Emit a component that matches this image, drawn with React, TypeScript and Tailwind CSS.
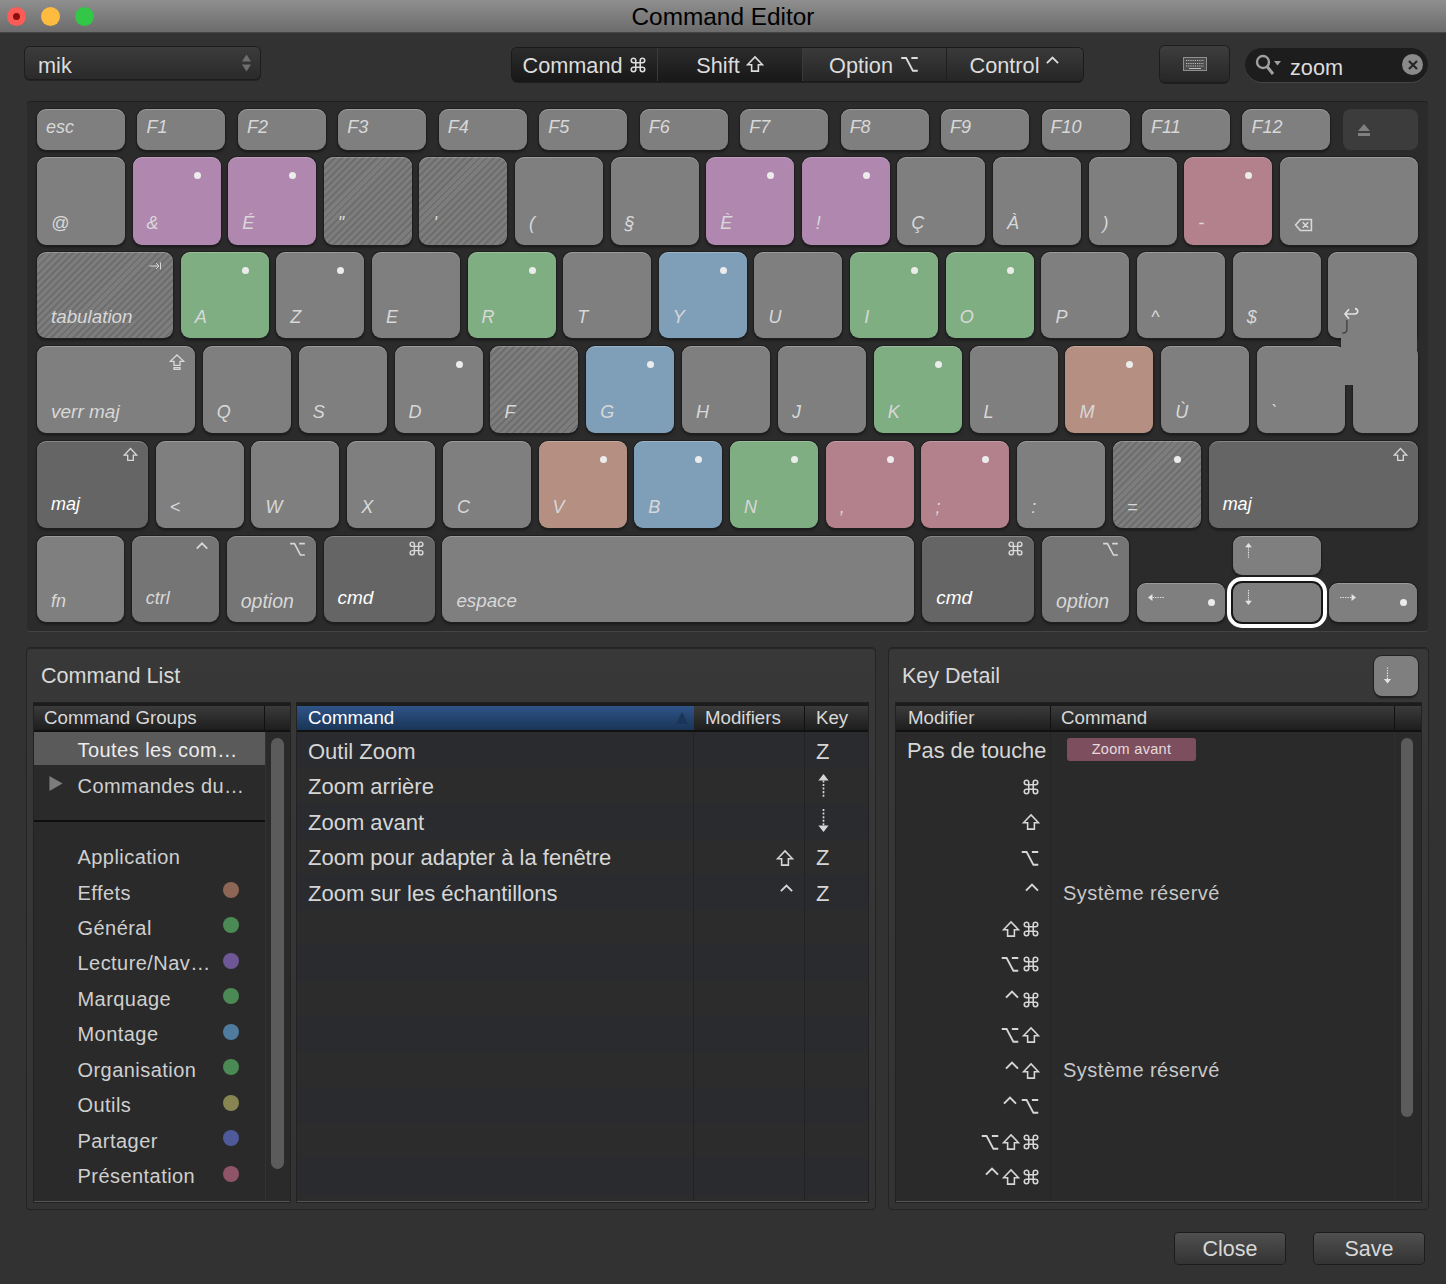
import React from "react";

const I = ({ className = "", children, vb = "0 0 24 24", sw = 2 }: { className?: string; children: React.ReactNode; vb?: string; sw?: number }) => (
  <svg viewBox={vb} className={className} fill="none" stroke="currentColor" strokeWidth={sw} strokeLinecap="butt" strokeLinejoin="miter">
    {children}
  </svg>
);
const Cmd = ({ className = "w-[18px] h-[18px]" }: { className?: string }) => (
  <I className={className} sw={2.1}><path d="M15 6v12a3 3 0 1 0 3-3H6a3 3 0 1 0 3 3V6a3 3 0 1 0-3 3h12a3 3 0 1 0-3-3" /></I>
);
const Shift = ({ className = "w-[18px] h-[20px]" }: { className?: string }) => (
  <I className={className} sw={2.1}><path d="M12 2.5 22 13h-5.5v8.5h-9V13H2z" /></I>
);
const Opt = ({ className = "w-[20px] h-[18px]" }: { className?: string }) => (
  <I className={className} sw={2.4}><path d="M1 4h6.5l9 17H23M14.5 4H23" /></I>
);
const Ctrl = ({ className = "w-[16px] h-[16px]" }: { className?: string }) => (
  <I className={className} sw={3}><path d="M3 13 12 4l9 9" /></I>
);
const Caps = ({ className = "w-[16px] h-[20px]" }: { className?: string }) => (
  <I className={className} sw={2}><path d="M12 1.5 22 11h-5.5v6h-9v-6H2zM7.5 20.5h9v2.5h-9z" /></I>
);
const ArrowV = ({ up, className = "w-[10px] h-[18px]" }: { up?: boolean; className?: string }) => (
  <svg viewBox="0 0 10 18" className={className} fill="currentColor">
    {up ? (
      <>
        <path d="M5 0 9 5H1z" />
        <path d="M5 5v13" stroke="currentColor" strokeWidth="1.3" strokeDasharray="1.6 1.2" fill="none" />
      </>
    ) : (
      <>
        <path d="M5 18 1 13h8z" />
        <path d="M5 0v13" stroke="currentColor" strokeWidth="1.3" strokeDasharray="1.6 1.2" fill="none" />
      </>
    )}
  </svg>
);
const ArrowH = ({ left }: { left?: boolean }) => (
  <svg viewBox="0 0 18 10" className="w-[16px] h-[9px] mt-[3px]" fill="currentColor">
    {left ? (
      <>
        <path d="M0 5l5-4v8z" />
        <path d="M5 5h13" stroke="currentColor" strokeWidth="1.3" strokeDasharray="1.6 1.2" fill="none" />
      </>
    ) : (
      <>
        <path d="M18 5l-5-4v8z" />
        <path d="M0 5h13" stroke="currentColor" strokeWidth="1.3" strokeDasharray="1.6 1.2" fill="none" />
      </>
    )}
  </svg>
);

const GREY = "bg-[#7f7f7f]";
const PUR = "bg-[#b087af]";
const GRN = "bg-[#7fae82]";
const BLU = "bg-[#7f9fb9]";
const ROS = "bg-[#b3818b]";
const SAL = "bg-[#b48f82]";
const DRK = "bg-[#656565]";
const MID = "bg-[#757575]";
const HAT =
  "bg-[repeating-linear-gradient(-45deg,#6e6e6e_0px,#6e6e6e_2px,#7d7d7d_2px,#7d7d7d_5px)]";
const KEYBASE =
  "relative flex flex-col shrink-0 h-full rounded-[9px] text-[#d8d8d8] italic shadow-[inset_0_1px_0_rgba(255,255,255,0.22),0_0_0_1px_#1f1f1f,0_2px_3px_rgba(0,0,0,0.5)]";

type KP = { w?: string; c?: string; l?: React.ReactNode; dot?: boolean; icon?: React.ReactNode; white?: boolean; sz?: string; b?: string };
function Key({ w = "w-[88px]", c = GREY, l, dot, icon, white, sz = "text-[18px]", b = "mb-[11px]" }: KP) {
  return (
    <div className={`${KEYBASE} ${w} ${c}`}>
      {dot && <span className="self-end mt-[14.5px] mr-[20px] w-[7px] h-[7px] rounded-full bg-[#ececec]" />}
      {icon && <span className="self-end mt-[5px] mr-[10px] flex not-italic">{icon}</span>}
      <span className={`mt-auto ml-[14px] leading-[20px] ${b} ${sz} ${white ? "text-white" : ""}`}>{l}</span>
    </div>
  );
}
function FKey({ l, w = "w-[88px]" }: { l: string; w?: string }) {
  return (
    <div className={`${KEYBASE} ${w} ${GREY} justify-center pl-[9px] pb-[5px] text-[18px]`}>{l}</div>
  );
}
function ArrowKey({ icon, dot, focus }: { icon: React.ReactNode; dot?: boolean; focus?: boolean }) {
  return (
    <div
      className={`relative flex justify-between w-[88px] h-[39px] rounded-[9px] text-[#e4e4e4] ${GREY} ${
        focus
          ? "shadow-[0_0_0_2px_#161616,0_0_0_6px_#ffffff]"
          : "shadow-[inset_0_1px_0_rgba(255,255,255,0.22),0_0_0_1px_#1f1f1f,0_2px_3px_rgba(0,0,0,0.5)]"
      }`}
    >
      <span className="ml-[11px] mt-[7px] flex">{icon}</span>
      {dot && <span className="mr-[10px] mt-[16px] w-[7px] h-[7px] rounded-full bg-[#ececec]" />}
    </div>
  );
}

const FS = ["F1", "F2", "F3", "F4", "F5", "F6", "F7", "F8", "F9", "F10", "F11", "F12"];
const R1 = "mb-[12px]";

function Keyboard() {
  return (
    <div className="ml-[27px] w-[1401px] shrink-0 h-[530px] bg-[#2b2b2b] rounded-[3px] pl-[10px] pt-[8px] shadow-[inset_0_1px_0_#1f1f1f,0_1px_0_#444444]">
      <div className="flex gap-[12.46px] h-[41px]">
        <FKey l="esc" />
        {FS.map((f) => (
          <FKey key={f} l={f} />
        ))}
        <div className="w-[75px] h-full rounded-[8px] bg-[#3c3c3c] flex items-center pl-[14px] text-[#808080]">
          <svg viewBox="0 0 14 14" className="w-[14px] h-[14px]" fill="currentColor">
            <path d="M7 1l6 7H1zM1 10h12v3H1z" />
          </svg>
        </div>
      </div>
      <div className="flex gap-[7.6px] h-[88px] mt-[7px]">
        <Key b={R1} l="@" />
        <Key b={R1} c={PUR} dot l="&" />
        <Key b={R1} c={PUR} dot l="É" />
        <Key b={R1} c={HAT} l='"' />
        <Key b={R1} c={HAT} l="'" />
        <Key b={R1} l="(" />
        <Key b={R1} l="§" />
        <Key b={R1} c={PUR} dot l="È" />
        <Key b={R1} c={PUR} dot l="!" />
        <Key b={R1} l="Ç" />
        <Key b={R1} l="À" />
        <Key b={R1} l=")" />
        <Key b={R1} c={ROS} dot l="-" />
        <Key
          b={R1}
          w="w-[138px]"
          l={
            <I className="w-[19px] h-[16px] -mt-[1px]" vb="0 0 24 20" sw={2}>
              <path d="M8 3h14v14H8l-6-7zM11 6.5l7 7M18 6.5l-7 7" />
            </I>
          }
        />
      </div>
      <div className="flex gap-[7.65px] h-[86px] mt-[7px]">
        <Key
          w="w-[136px]"
          c={HAT}
          l="tabulation"
          sz="text-[18.8px]"
          icon={
            <I className="w-[16px] h-[12px] mt-[3px]" sw={2}>
              <path d="M1 12h19M14 6l6 6-6 6M23 5v14" />
            </I>
          }
        />
        {[
          ["A", GRN, 1],
          ["Z", GREY, 1],
          ["E", GREY, 0],
          ["R", GRN, 1],
          ["T", GREY, 0],
          ["Y", BLU, 1],
          ["U", GREY, 0],
          ["I", GRN, 1],
          ["O", GRN, 1],
          ["P", GREY, 0],
          ["^", GREY, 0],
          ["$", GREY, 0],
        ].map(([l, c, d]) => (
          <Key key={l as string} l={l as string} c={c as string} dot={!!d} />
        ))}
        <div className={`${KEYBASE} z-10 w-[89px] rounded-br-none ${GREY}`}>
          <span className="mt-auto mb-[17px] ml-[15px] flex text-[#e4e4e4]">
            <I className="w-[16px] h-[14px]" vb="0 0 24 20" sw={2.4}>
              <path d="M9 3 3 10l6 7M3 10h14c3 0 5-2 5-4s-1-4-4-4" />
            </I>
          </span>
          <svg viewBox="0 0 8 16" className="absolute left-[13px] top-[68px] w-[8px] h-[15px] text-[#454545]" fill="none" stroke="currentColor" strokeWidth="1.5">
            <path d="M6 0v10c0 3-2 4-5 4" />
          </svg>
          <div className={`absolute left-[13px] top-[84px] w-[76px] h-[49px] ${GREY}`} />
        </div>
      </div>
      <div className="flex gap-[7.85px] h-[87px] mt-[8px]">
        <Key w="w-[158px]" l="verr maj" sz="text-[19px]" icon={<Caps className="w-[16px] h-[20px] mt-[1px]" />} />
        {[
          ["Q", GREY, 0],
          ["S", GREY, 0],
          ["D", GREY, 1],
          ["F", HAT, 0],
          ["G", BLU, 1],
          ["H", GREY, 0],
          ["J", GREY, 0],
          ["K", GRN, 1],
          ["L", GREY, 0],
          ["M", SAL, 1],
          ["Ù", GREY, 0],
          ["`", GREY, 0],
        ].map(([l, c, d]) => (
          <Key key={l as string} l={l as string} c={c as string} dot={!!d} />
        ))}
        <Key w="w-[65px]" />
      </div>
      <div className="flex gap-[7.73px] h-[87px] mt-[8px]">
        <Key w="w-[111px]" c={DRK} white b="mb-[14px]" l="maj" icon={<Shift className="w-[15px] h-[17px]" />} />
        <Key l="<" />
        <Key l="W" />
        <Key l="X" />
        <Key l="C" />
        <Key c={SAL} dot l="V" />
        <Key c={BLU} dot l="B" />
        <Key c={GRN} dot l="N" />
        <Key c={ROS} dot l="," />
        <Key c={ROS} dot l=";" />
        <Key l=":" />
        <Key c={HAT} dot l="=" />
        <Key w="w-[209px]" c={DRK} white b="mb-[14px]" l="maj" icon={<Shift className="w-[15px] h-[17px]" />} />
      </div>
      <div className="flex gap-[7.85px] h-[86px] mt-[8px]">
        <Key w="w-[87px]" l="fn" />
        <Key w="w-[87px]" c={MID} l="ctrl" b="mb-[14px]" icon={<Ctrl className="w-[14px] h-[14px]" />} />
        <Key w="w-[89px]" c={MID} l="option" sz="text-[19.5px]" icon={<Opt className="w-[17px] h-[16px]" />} />
        <Key w="w-[111px]" c={DRK} white l="cmd" sz="text-[19px]" b="mb-[14px]" icon={<Cmd className="w-[17px] h-[17px] -mt-[1px]" />} />
        <Key w="w-[472px]" l="espace" sz="text-[18.8px]" />
        <Key w="w-[112px]" c={DRK} white l="cmd" sz="text-[19px]" b="mb-[14px]" icon={<Cmd className="w-[17px] h-[17px] -mt-[1px]" />} />
        <Key w="w-[87px]" c={MID} l="option" sz="text-[19.5px]" icon={<Opt className="w-[17px] h-[16px]" />} />
        <div className="w-[281px] h-full flex flex-col justify-between">
          <div className="flex pl-[96px]">
            <ArrowKey icon={<ArrowV up className="w-[9px] h-[15px]" />} />
          </div>
          <div className="flex gap-[8px]">
            <ArrowKey icon={<ArrowH left />} dot />
            <ArrowKey focus icon={<ArrowV className="w-[9px] h-[15px]" />} />
            <ArrowKey icon={<ArrowH />} dot />
          </div>
        </div>
      </div>
    </div>
  );
}

function Toolbar() {
  return (
    <div className="h-[68px] shrink-0 flex items-center pb-[8px] pl-[25px] text-[#dcdcdc] text-[21.7px]">
      <div className="w-[235px] h-[32px] rounded-[5px] flex items-center justify-between pl-[13px] pr-[9px] bg-gradient-to-b from-[#3c3c3c] to-[#2a2a2a] shadow-[0_0_0_1px_#1d1d1d,0_1px_0_1px_#222222]">
        <span className="mt-[7px]">mik</span>
        <span className="flex flex-col gap-[2px] text-[#6e6e6e]">
          <svg viewBox="0 0 10 8" className="w-[9px] h-[8px]" fill="currentColor"><path d="M5 0l5 8H0z" /></svg>
          <svg viewBox="0 0 10 8" className="w-[9px] h-[8px]" fill="currentColor"><path d="M5 8l5-8H0z" /></svg>
        </span>
      </div>
      <div className="ml-[252px] mt-[3px] h-[33px] w-[571px] flex rounded-[5px] shadow-[0_0_0_1px_#1a1a1a,0_2px_0_#1e1e1e] overflow-hidden">
        <div className="w-[146px] flex items-center justify-center gap-[6px] bg-gradient-to-b from-[#2c2c2c] to-[#181818] border-r border-[#3a3a3a]">
          <span className="mt-[4px]">Command</span> <Cmd className="w-[18px] h-[18px]" />
        </div>
        <div className="w-[145px] flex items-center justify-center gap-[6px] bg-gradient-to-b from-[#2c2c2c] to-[#181818] border-r border-[#3a3a3a]">
          <span className="mt-[4px]">Shift</span> <Shift className="w-[18px] h-[20px] -mt-[1px]" />
        </div>
        <div className="w-[144px] flex items-center justify-center gap-[6px] bg-gradient-to-b from-[#3a3a3a] to-[#262626] border-r border-[#1f1f1f]">
          <span className="mt-[4px]">Option</span> <Opt className="w-[21px] h-[18px] -mt-[1px]" />
        </div>
        <div className="w-[136px] flex items-center justify-center gap-[6px] bg-gradient-to-b from-[#3a3a3a] to-[#262626]">
          <span className="mt-[4px]">Control</span> <Ctrl className="w-[15px] h-[15px] mb-[5px]" />
        </div>
      </div>
      <div className="ml-[77px] mt-[1px] w-[69px] h-[36px] rounded-[5px] flex items-center justify-center bg-gradient-to-b from-[#3e3e3e] to-[#272727] shadow-[0_0_0_1px_#1d1d1d,0_2px_0_#1e1e1e]">
        <svg viewBox="0 0 24 14" className="w-[24px] h-[14px]" fill="none">
          <rect x="0.5" y="0.5" width="23" height="13" fill="#4d4d4d" stroke="#8f8f8f" />
          <path d="M3 3.5h18M3 6.5h18M3 9h18" stroke="#bdbdbd" strokeDasharray="1.2 1" />
          <path d="M6 11.5h12" stroke="#bdbdbd" />
        </svg>
      </div>
      <div className="ml-[16px] mt-[3px] w-[183px] h-[34px] rounded-full bg-[#1d1d1d] shadow-[0_1px_0_#454545] flex items-center pl-[8px] pr-[5px]">
        <svg viewBox="0 0 26 22" className="w-[30px] h-[22px] text-[#a0a0a0]" fill="none" stroke="currentColor" strokeWidth="2.4">
          <circle cx="8" cy="8" r="6" />
          <path d="M12 12.5 18 20" strokeWidth="3" />
          <path d="M19 7h7l-3.5 4.5z" fill="currentColor" stroke="none" />
        </svg>
        <span className="ml-[7px] flex-1 mt-[7px]">zoom</span>
        <span className="w-[21px] h-[21px] rounded-full bg-[#8a8a8a] flex items-center justify-center">
          <svg viewBox="0 0 10 10" className="w-[10px] h-[10px] text-[#262626]" fill="none" stroke="currentColor" strokeWidth="2.2">
            <path d="M1 1l8 8M9 1l-8 8" />
          </svg>
        </span>
      </div>
    </div>
  );
}

const HEAD = "h-[26px] shrink-0 bg-gradient-to-b from-[#3b3b3b] to-[#1e1e1e] border-b-[2px] border-[#111111] flex items-center text-[18.7px] leading-none text-[#d8d8d8]";

const GROUPS: [string, string][] = [
  ["Application", ""],
  ["Effets", "bg-[#8d6656]"],
  ["Général", "bg-[#4b8a54]"],
  ["Lecture/Nav…", "bg-[#6e5796]"],
  ["Marquage", "bg-[#4b8a54]"],
  ["Montage", "bg-[#4f7b9e]"],
  ["Organisation", "bg-[#4b8a54]"],
  ["Outils", "bg-[#878552]"],
  ["Partager", "bg-[#4f5a9a]"],
  ["Présentation", "bg-[#8f5468]"],
];

const TABLE = "shrink-0 flex flex-col h-[499px] overflow-hidden border-t-[3px] border-t-[#1c1c1c] border-b border-b-[#555555] shadow-[0_0_0_1px_#222222]";

function Groups() {
  return (
    <div className={`${TABLE} w-[256px] bg-[#2a2a2a]`}>
      <div className={HEAD}>
        <div className="w-[231px] pl-[10px] border-r border-[#111111] h-full flex items-center">Command Groups</div>
      </div>
      <div className="flex flex-1 min-h-0">
        <div className="w-[231px] text-[20px] tracking-[0.45px] text-[#cfcfcf]">
          <div className="h-[33px] bg-[#5a5a5a] pl-[43.5px] pt-[2px] flex items-center text-[#ececec] mb-[2.5px]">Toutes les com…</div>
          <div className="h-[35.45px] pl-[15px] pt-[2px] flex items-center">
            <svg viewBox="0 0 14 16" className="w-[14px] h-[15px] text-[#7c7c7c] mb-[5px]" fill="currentColor"><path d="M0 0l14 8-14 8z" /></svg>
            <span className="ml-[14.5px]">Commandes du…</span>
          </div>
          <div className="h-[35.45px] flex items-center"><div className="w-full h-[2px] bg-[#0e0e0e]" /></div>
          {GROUPS.map(([g, c]) => (
            <div key={g} className="h-[35.45px] pl-[43.5px] pr-[26px] flex items-center justify-between">
              <span className="pt-[2px]">{g}</span>
              {c && <span className={`w-[16px] h-[16px] rounded-full mb-[3px] ${c}`} />}
            </div>
          ))}
        </div>
        <div className="flex-1 border-l border-[#333333] pl-[5px] pt-[6px]">
          <div className="w-[13px] h-[431px] rounded-full bg-[#5b5b5b]" />
        </div>
      </div>
    </div>
  );
}

const CMDS: [string, React.ReactNode, React.ReactNode][] = [
  ["Outil Zoom", null, "Z"],
  ["Zoom arrière", null, <ArrowV up className="w-[13px] h-[23px] ml-[1px] mb-[3px]" />],
  ["Zoom avant", null, <ArrowV className="w-[13px] h-[23px] ml-[1px] mb-[3px]" />],
  ["Zoom pour adapter à la fenêtre", <Shift className="w-[18px] h-[20px]" />, "Z"],
  ["Zoom sur les échantillons", <Ctrl className="w-[15px] h-[15px] mb-[6px]" />, "Z"],
];

function CommandTable() {
  const rows = Array.from({ length: 14 }, (_, i) => i);
  return (
    <div className={`${TABLE} w-[571px] bg-[#2b2b2b]`}>
      <div className={HEAD}>
        <div className="w-[397px] h-full pl-[11px] pr-[6px] flex items-center justify-between bg-gradient-to-b from-[#2f5488] to-[#1a3557] text-white">
          Command
          <svg viewBox="0 0 12 12" className="w-[12px] h-[12px] text-[#1a3557]" fill="currentColor"><path d="M6 0l6 12H0z" /></svg>
        </div>
        <div className="w-[111px] h-full pl-[11px] flex items-center border-r border-[#111111]">Modifiers</div>
        <div className="pl-[11px]">Key</div>
      </div>
      <div className="flex-1 min-h-0 overflow-hidden text-[22px] text-[#d6d6d6]">
        {rows.map((i) => (
          <div key={i} className={`h-[35.5px] flex ${i % 2 === 0 ? "bg-[#292b2e]" : "bg-[#2c2c2c]"}`}>
            <div className="w-[397px] pl-[11px] pt-[3px] flex items-center border-r border-[#222222]">{CMDS[i]?.[0]}</div>
            <div className="w-[111px] pr-[10px] pt-[3px] flex items-center justify-end border-r border-[#222222]">{CMDS[i]?.[1]}</div>
            <div className="pl-[11px] pt-[3px] flex items-center">{CMDS[i]?.[2]}</div>
          </div>
        ))}
      </div>
    </div>
  );
}

const C = <Cmd className="w-[18px] h-[18px]" />;
const S = <Shift className="w-[18px] h-[20px]" />;
const O = <Opt className="w-[20px] h-[18px]" />;
const H = <Ctrl className="w-[16px] h-[16px] mb-[6px]" />;
const DETAIL: [React.ReactNode[], boolean?][] = [
  [[C]],
  [[S]],
  [[O]],
  [[H], true],
  [[S, C]],
  [[O, C]],
  [[H, C]],
  [[O, S]],
  [[H, S], true],
  [[H, O]],
  [[O, S, C]],
  [[H, S, C]],
];

function KeyDetail() {
  return (
    <div className={`${TABLE} w-[525px] ml-[7px] bg-[#2a2a2a]`}>
      <div className={HEAD}>
        <div className="w-[155px] h-full pl-[12px] flex items-center border-r border-[#111111]">Modifier</div>
        <div className="w-[344px] h-full pl-[10px] flex items-center border-r border-[#111111]">Command</div>
      </div>
      <div className="flex flex-1 min-h-0 text-[#d6d6d6]">
        <div className="w-[155px] border-r border-[#262626]">
          <div className="h-[35.5px] pl-[11px] pt-[3px] flex items-center text-[21.8px] whitespace-nowrap">Pas de touche</div>
          {DETAIL.map(([m], i) => (
            <div key={i} className="h-[35.5px] pr-[10px] pt-[3px] flex items-center justify-end gap-[2px]">
              {m.map((x, j) => (
                <React.Fragment key={j}>{x}</React.Fragment>
              ))}
            </div>
          ))}
        </div>
        <div className="w-[344px] border-r border-[#2e2e2e] text-[20px] tracking-[0.45px] text-[#c8c8c8]">
          <div className="h-[35.5px] pl-[16px] flex items-start pt-[6px]">
            <span className="w-[129px] h-[23px] rounded-[3px] bg-[#7d4f5e] text-[14.5px] tracking-[0.3px] text-[#e6dade] flex items-center justify-center">Zoom avant</span>
          </div>
          {DETAIL.map(([, r], i) => (
            <div key={i} className="h-[35.5px] pl-[12px] pt-[2px] flex items-center">{r ? "Système réservé" : ""}</div>
          ))}
        </div>
        <div className="flex-1 pl-[6px] pt-[6px]">
          <div className="w-[12px] h-[379px] rounded-full bg-[#5b5b5b]" />
        </div>
      </div>
    </div>
  );
}

const PANEL = "h-[561px] shrink-0 rounded-[4px] bg-gradient-to-b from-[#383838] to-[#333333] shadow-[inset_0_1px_0_#262626,0_0_0_1px_#242424,0_1px_1px_#1e1e1e] flex flex-col";

export default function App() {
  return (
    <div className="w-[1446px] h-[1284px] bg-[#323232] flex flex-col overflow-hidden font-['Liberation_Sans',Arial,sans-serif]">
      <div className="h-[33px] shrink-0 flex items-center relative bg-gradient-to-b from-[#8f8f8f] to-[#6c6c6c] border-b border-[#454545]">
        <div className="flex gap-[15px] pl-[7px] pt-[1px]">
          <span className="w-[19px] h-[19px] rounded-full bg-[#fc5b57] flex items-center justify-center">
            <span className="w-[7px] h-[7px] rounded-full bg-[#8c0f0a]" />
          </span>
          <span className="w-[19px] h-[19px] rounded-full bg-[#fdbc40]" />
          <span className="w-[19px] h-[19px] rounded-full bg-[#33c748]" />
        </div>
        <div className="absolute inset-x-0 top-[5px] text-center text-[24.4px] text-black leading-none">Command Editor</div>
      </div>
      <Toolbar />
      <Keyboard />
      <div className="flex mt-[17px] ml-[27px] gap-[14px]">
        <div className={`${PANEL} w-[848px]`}>
          <div className="h-[55px] shrink-0 pl-[14px] pt-[1px] flex items-center text-[21.6px] text-[#d8d8d8]">Command List</div>
          <div className="flex mx-[7px] gap-[7px]">
            <Groups />
            <CommandTable />
          </div>
        </div>
        <div className={`${PANEL} w-[539px]`}>
          <div className="h-[55px] shrink-0 pl-[13px] pr-[10px] flex items-center justify-between text-[21.5px] text-[#d8d8d8]">
            <span className="pt-[2px]">Key Detail</span>
            <span className="w-[44px] h-[40px] rounded-[8px] bg-[#7f7f7f] pl-[9px] flex items-center text-[#e4e4e4] shadow-[0_0_0_1px_#222222,0_2px_2px_#1c1c1c]">
              <ArrowV className="w-[9px] h-[17px]" />
            </span>
          </div>
          <KeyDetail />
        </div>
      </div>
      <div className="flex justify-end gap-[29px] pr-[22px] mt-[24px] text-[21.5px] text-[#d8d8d8]">
        {["Close", "Save"].map((b) => (
          <div key={b} className="w-[110px] h-[31px] rounded-[4px] pt-[2px] flex items-center justify-center bg-gradient-to-b from-[#505050] to-[#333333] shadow-[0_0_0_1px_#1c1c1c]">
            {b}
          </div>
        ))}
      </div>
    </div>
  );
}
